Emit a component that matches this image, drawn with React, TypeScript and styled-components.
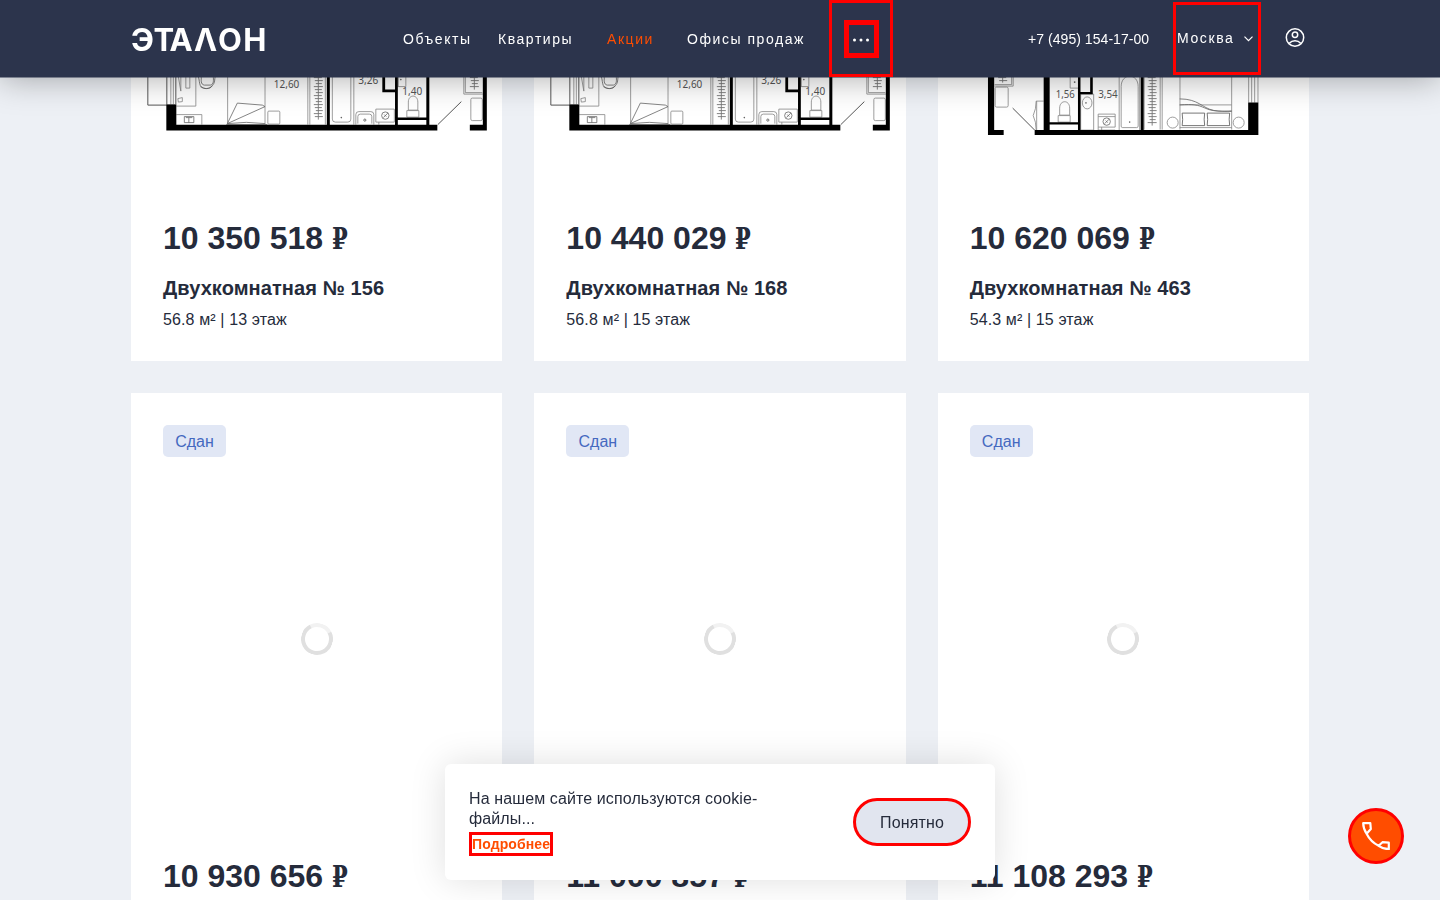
import React from 'react';
import styled, { createGlobalStyle, keyframes } from 'styled-components';

const GlobalStyle = createGlobalStyle`
  *, *::before, *::after { box-sizing: border-box; }
  html, body { margin: 0; background: #edf0f5; }
  body {
    color: #252b3b;
    font-family: "Liberation Sans", Arial, sans-serif;
    font-size: 16px;
    overflow: hidden;
  }
  button { font: inherit; color: inherit; cursor: pointer; }
  a { color: inherit; text-decoration: none; }
`;

const Page = styled.div`
  height: 900px;
  overflow: hidden;
`;

const Header = styled.header`
  position: fixed;
  inset: 0 0 auto 0;
  z-index: 2;
  height: 78px;
  padding-left: 131px;
  display: flex;
  align-items: flex-start;
  background: #2c344c;
  background-clip: padding-box;
  border-bottom: 1px solid rgba(44, 52, 76, 0.5);
  box-shadow: 0 0 34px rgba(0, 0, 0, 0.34);
  color: #fff;
  font-size: 14px;
`;

const Logo = styled.a`
  width: 272px;
  height: 77px;
  svg { display: block; }
`;

const Nav = styled.nav`
  display: flex;
  height: 77px;
  line-height: 78px;
  letter-spacing: 1.55px;
`;

const NavLink = styled.a<{ $width: number; $accent?: boolean }>`
  width: ${(p) => p.$width}px;
  white-space: nowrap;
  color: ${(p) => (p.$accent ? '#ff4d00' : '#fff')};
`;

const MoreItem = styled.div`
  width: 64px;
  height: 77px;
  border: 3px solid #f00;
  padding: 17px 0 0 12px;
`;

const MoreButton = styled.button`
  width: 35px;
  height: 38px;
  padding: 2px 1px 0 0;
  border: 5px solid #f00;
  background: none;
  display: flex;
  align-items: center;
  justify-content: center;
`;

const Phone = styled.a`
  width: 145px;
  margin-left: 135px;
  line-height: 78px;
  letter-spacing: 0.05px;
  white-space: nowrap;
`;

const City = styled.button`
  width: 88px;
  height: 73px;
  margin-top: 2px;
  padding: 0 5px 0 1px;
  display: flex;
  align-items: center;
  justify-content: space-between;
  border: 3px solid #f00;
  background: none;
  letter-spacing: 1.6px;
  line-height: 18px;
  svg { margin-top: 1px; }
`;

const CityName = styled.span`
  padding-bottom: 2px;
`;

const Profile = styled.a`
  margin: 27px 0 0 24px;
  svg { display: block; }
`;

const Grid = styled.main`
  margin: -244.600px 131px 0;
  display: grid;
  grid-template-columns: repeat(3, minmax(0, 1fr));
  gap: 32px;
`;

const Card = styled.article`
  height: 606px;
  padding: 32px 32px 0;
  background: #fff;
`;

const TagRow = styled.div`
  height: 44px;
`;

const Tag = styled.span`
  display: block;
  width: 63px;
  height: 32px;
  border-radius: 5px;
  background: #e1e7f5;
  color: #4569c0;
  line-height: 33px;
  text-align: center;
`;

const Media = styled.div`
  height: 340px;
  margin: 0 -16px;
  display: flex;
  align-items: center;
  justify-content: center;
`;

const Price = styled.div`
  margin-top: 47px;
  height: 40px;
  font-size: 32px;
  line-height: 40px;
  font-weight: 700;
  white-space: nowrap;
`;

const Ruble = styled.span`
  display: inline-block;
  font-family: "DejaVu Serif", serif;
  font-size: 29px;
  line-height: 1;
  transform: scaleX(0.78);
  transform-origin: left center;
`;

const Name = styled.h3`
  margin: 18px 0 0;
  font-size: 20px;
  line-height: 24px;
  letter-spacing: 0.08px;
`;

const Details = styled.p`
  margin: 10px 0 0;
  line-height: 20px;
  letter-spacing: 0.12px;
`;

const spin = keyframes`
  to { transform: rotate(360deg); }
`;

const Spinner = styled.div`
  width: 32px;
  height: 32px;
  border: 4px solid #e0e0e0;
  border-top-color: #f2f2f2;
  border-radius: 50%;
  transform: rotate(18deg);
  &:hover { animation: ${spin} 1s linear infinite; }
`;

const CookieBar = styled.aside`
  position: fixed;
  z-index: 3;
  left: calc(50% - 275px);
  bottom: 20px;
  width: 550px;
  height: 116px;
  padding: 24px;
  display: flex;
  justify-content: space-between;
  align-items: center;
  border-radius: 6px;
  background: #fff;
  box-shadow: 0 0 36px rgba(0, 0, 0, 0.13);
`;

const CookieText = styled.div`
  width: 300px;
  padding-top: 1px;
  line-height: 20px;
  letter-spacing: 0.11px;
`;

const MoreLink = styled.a`
  display: block;
  width: 84px;
  height: 24px;
  margin-top: 3px;
  border: 3px solid #f00;
  color: #ff4d00;
  font-size: 14px;
  font-weight: 700;
  line-height: 19px;
  white-space: nowrap;
`;

const Accept = styled.button`
  width: 118px;
  height: 48px;
  padding: 1px 0 0;
  border: 3px solid #f00;
  border-radius: 24px;
  background: #e1e5ef;
  letter-spacing: 0.12px;
`;

const CallButton = styled.button`
  position: fixed;
  z-index: 3;
  right: 36px;
  bottom: 36px;
  width: 56px;
  height: 56px;
  padding: 0;
  display: flex;
  align-items: center;
  justify-content: center;
  border: 3px solid #f00;
  border-radius: 50%;
  background: #ff4d00;
`;

const PlanSvg = styled.svg`
  width: 340px;
  height: 340px;
  flex: none;
  fill: none;
  stroke: #858585;
  stroke-width: 0.8;
  .wall { fill: #000; stroke: none; }
  .dark { stroke: #555; stroke-width: 1; }
  .dot { fill: #666; stroke: none; }
  text {
    fill: #555;
    stroke: none;
    font: 11.5px "Noto Sans", sans-serif;
  }
`;

/** Hangers on a wardrobe rail: a centre line crossed by short bars. */
function Hangers({ x, to }: { x: number; to: number }) {
  const ticks: string[] = [];
  for (let y = 78, i = 0; y < to; y += 3, i++) {
    ticks.push(`M${x - 4.5 + (i % 3)} ${y}H${x + 4.5 - ((i + 1) % 2)}`);
  }
  return <path stroke="#777" strokeWidth={0.9} d={`M${x} 70V${to}${ticks.join('')}`} />;
}

function PlanWide() {
  return (
    <PlanSvg viewBox="146.670 -168.600 340 340">
      <path className="dark" d="M147.500 70V105.500H175M166.500 70V105M175.500 70V105" />
      <path d="M170.500 70V105M173 70V105" />
      <path d="M176 106.500H195.500V70M178 77l2.500 14.500V70M185.500 70v18.500h4v-18.500M177.500 99l4.500-1v4l-4 .5zM176 115h25.500v10" />
      <path stroke="#666" d="M184 117h9.500v6H184zM188.500 118v5M185.500 118h6.500" />
      <path stroke="#666" d="M198 77c1 3 1 7 2 9 3 4 10 4 12 0 3-3 2-6 3-10M201 77c0 3-1 8 3 8.500h6c4-1 3-5 3-9M200 87c4 3 9 2.500 12-1" />
      <path d="M227.300 70V124M264.700 70V124" />
      <path stroke="#666" d="M227 124L237 103.500 262 105.500 264.700 107 227 124M227 124q19-2.500 38 0M226 125h41" />
      <rect x="267.500" y="111.500" width="12" height="13" rx="1" />
      <path d="M307.500 70V125M309.500 70V125M325 70V125" />
      <Hangers x={318} to={120} />
      <text x="273.500" y="88" textLength="25.500" lengthAdjust="spacingAndGlyphs">12,60</text>
      <rect x="332" y="60" width="18.500" height="62.500" rx="3" />
      <path d="M353.500 70V125" />
      <circle className="dot" cx="341" cy="118" r=".8" />
      <text x="358" y="84" textLength="20" lengthAdjust="spacingAndGlyphs">3,26</text>
      <path d="M355.500 125v-10q0-3 3-3h12q3 0 3 3v10M357.500 124v-7q0-2.500 2.500-2.500h9q2.500 0 2.500 2.500v7" />
      <circle cx="364.500" cy="120.500" r="1.100" stroke="#555" />
      <path d="M375.500 109.500H394v13H375.500zM378.500 122.500v2.500" />
      <circle cx="385" cy="116" r="3.700" stroke="#666" />
      <path stroke="#666" d="M383 118l4.500-4.500M384 115l2 2" />
      <path d="M397.500 87h8V70M398 77v10" />
      <circle className="dot" cx="400.500" cy="80" r=".8" />
      <text x="402" y="95.500" textLength="20" lengthAdjust="spacingAndGlyphs">1,40</text>
      <path d="M408 110.500v-8c0-8 9.500-8 9.500 0v8zM406.500 111h12v6.500h-12z" />
      <path className="dark" d="M437.500 125L461 102" />
      <path d="M463.500 70V94.500H482.500M465 70V93H482" />
      <Hangers x={474} to={90} />
      <rect x="470.500" y="98.500" width="11.500" height="22.500" rx="1.500" />
      <path
        className="wall"
        d="M166 105h10v20.200h261v5.800H166zM469.500 125.200h13V70h4v61h-17zM326.500 70h3v55.500h-3zM394.700 70h2.800v55.500h-2.800zM426 70h3v55.500h-3zM396 118h32v2.500h-32zM382 70h2.800v20h11v2.600H382z"
      />
    </PlanSvg>
  );
}

function PlanNarrow() {
  return (
    <PlanSvg viewBox="953.330 -168.600 340 340">
      <path d="M995 86.500h18.500V70M995 85h17V70" />
      <Hangers x={1003} to={83} />
      <rect x="995.500" y="87.500" width="13" height="20" rx="1.500" />
      <path className="dark" d="M1013 108.500L1035 130.500" />
      <path d="M1044 101.500h-7.500q0 8-3 14.500 3 6 3 14.500M1037 101.500v29" />
      <path d="M1070.500 70V88.500h8" />
      <circle className="dot" cx="1075" cy="82.500" r=".9" />
      <text x="1056" y="98.500" textLength="19" lengthAdjust="spacingAndGlyphs">1,56</text>
      <path d="M1060 115.500v-7c0-8.500 10-8.500 10 0v7zM1058.500 116h12v6.500h-12z" />
      <path d="M1081 94.500h13v36h-13z" />
      <ellipse cx="1087.500" cy="103.300" rx="4.800" ry="6" />
      <circle className="dot" cx="1086.300" cy="103.300" r=".8" />
      <text x="1098.500" y="98.500" textLength="19.500" lengthAdjust="spacingAndGlyphs">3,54</text>
      <path d="M1098.500 114.500h17v13h-17zM1098.500 117h17M1102 127.500v3M1098.500 127.500v3h17" />
      <circle cx="1107" cy="122" r="3.700" stroke="#666" />
      <path stroke="#666" d="M1105 124l4.500-4.500M1106 121l2 2" />
      <path d="M1119.500 70v60.500M1140 70v60.500M1121.500 126.500V87c0-14 17-14 17 0v39.500q0 1.500-1.500 1.500h-14q-1.500 0-1.500-1.500z" />
      <circle className="dot" cx="1130" cy="122.500" r=".8" />
      <path d="M1144.500 70v60M1160.500 70v60M1162.500 70v60" />
      <Hangers x={1152.5} to={126} />
      <circle cx="1173" cy="123" r="5.500" />
      <circle cx="1239" cy="123" r="5.500" />
      <path d="M1180.300 70v60M1232 70v60M1180 105.300h52M1180 128h52" />
      <path stroke="#666" d="M1180 99.300c19 0 22 9 34 11.500 6 1 12 1 18 1M1180 105.300c14-1 18 0 25 3 8 4 18 3.500 27 3" />
      <path stroke="#555" d="M1182.500 113.500h22.500q-1 6 0 12.500h-22.500q1-6 0-12.500zM1207.500 113.500h22.500q-1 6 0 12.500h-22.500q1-6 0-12.500z" />
      <path d="M1249 70v33M1252 70v33M1255 70v33M1258.300 70v33" />
      <path
        className="wall"
        d="M988.300 70h6.200v60.500h9.500v4.800h-15.700zM1035 130.500h213.500V103h10.200v32.300H1035zM1044 70h6v61h-6zM1078.300 70h2.500v61h-2.500zM1080 92.500h10.500V70h2.600v24.700h-13zM1141 70h3v61h-3zM1050 122.700h29v2.200h-29z"
      />
    </PlanSvg>
  );
}

type Flat = {
  price: string;
  ready?: boolean;
  name?: string;
  details?: string;
  plan?: 'wide' | 'narrow';
};

const flats: Flat[] = [
  { price: '10 350 518', name: 'Двухкомнатная № 156', details: '56.8 м² | 13 этаж', plan: 'wide' },
  { price: '10 440 029', name: 'Двухкомнатная № 168', details: '56.8 м² | 15 этаж', plan: 'wide' },
  { price: '10 620 069', name: 'Двухкомнатная № 463', details: '54.3 м² | 15 этаж', plan: 'narrow' },
  { price: '10 930 656', ready: true },
  { price: '11 000 857', ready: true },
  { price: '11 108 293', ready: true },
];

function FlatCard({ flat }: { flat: Flat }) {
  return (
    <Card>
      <TagRow>{flat.ready && <Tag>Сдан</Tag>}</TagRow>
      <Media>
        {flat.plan === 'wide' && <PlanWide />}
        {flat.plan === 'narrow' && <PlanNarrow />}
        {!flat.plan && <Spinner />}
      </Media>
      <Price>
        {flat.price} <Ruble>₽</Ruble>
      </Price>
      {flat.name && <Name>{flat.name}</Name>}
      {flat.details && <Details>{flat.details}</Details>}
    </Card>
  );
}

export default function App() {
  return (
    <Page>
      <GlobalStyle />
      <Header>
        <Logo href="#" aria-label="ЭТАЛОН">
          <svg width="140" height="77" fill="#fff">
            <text
              x="0 22.500 38.500 63 87 112.300"
              y="50.700"
              fontFamily="Inter, sans-serif"
              fontWeight="700"
              fontSize="31"
            >
              ЭТАΛОН
            </text>
          </svg>
        </Logo>
        <Nav>
          <NavLink href="#" $width={95}>Объекты</NavLink>
          <NavLink href="#" $width={109}>Квартиры</NavLink>
          <NavLink href="#" $width={80} $accent>Акции</NavLink>
          <NavLink href="#" $width={142}>Офисы продаж</NavLink>
        </Nav>
        <MoreItem>
          <MoreButton aria-label="Ещё">
            <svg width="18" height="4" fill="#fff">
              <circle cx="2.500" cy="2" r="1.500" />
              <circle cx="9" cy="2" r="1.500" />
              <circle cx="15.500" cy="2" r="1.500" />
            </svg>
          </MoreButton>
        </MoreItem>
        <Phone href="tel:+74951541700">+7 (495) 154-17-00</Phone>
        <City>
          <CityName>Москва</CityName>
          <svg width="9" height="6" fill="none" stroke="#fff" strokeWidth="1.200">
            <path d="M.5 .7L4.500 4.700 8.500 .7" />
          </svg>
        </City>
        <Profile href="#" aria-label="Профиль">
          <svg width="20" height="20" fill="none" stroke="#fff" strokeWidth="1.500">
            <circle cx="10" cy="10.500" r="8.700" />
            <circle cx="10" cy="7.800" r="2.700" />
            <path d="M4.300 16.200c3-3.200 8.400-3.200 11.400 0" />
          </svg>
        </Profile>
      </Header>
      <Grid>
        {flats.map((flat) => (
          <FlatCard key={flat.price} flat={flat} />
        ))}
      </Grid>
      <CookieBar>
        <CookieText>
          На нашем сайте используются cookie-файлы...
          <MoreLink href="#">Подробнее</MoreLink>
        </CookieText>
        <Accept>Понятно</Accept>
      </CookieBar>
      <CallButton aria-label="Позвонить">
        <svg width="28" height="28" fill="none" stroke="#fff" strokeWidth="2.200" strokeLinejoin="round">
          <path d="M1.200 1.200H8.300L8.800 7 4.600 11.800C2.600 8.500 1.200 5 1.200 1.200zM4.600 11.800C7.200 17 11 21 16.600 23.800M16.600 23.800L20.500 20.200 26.800 20.700V27.200C23 27 19.500 25.800 16.600 23.800z" />
        </svg>
      </CallButton>
    </Page>
  );
}
